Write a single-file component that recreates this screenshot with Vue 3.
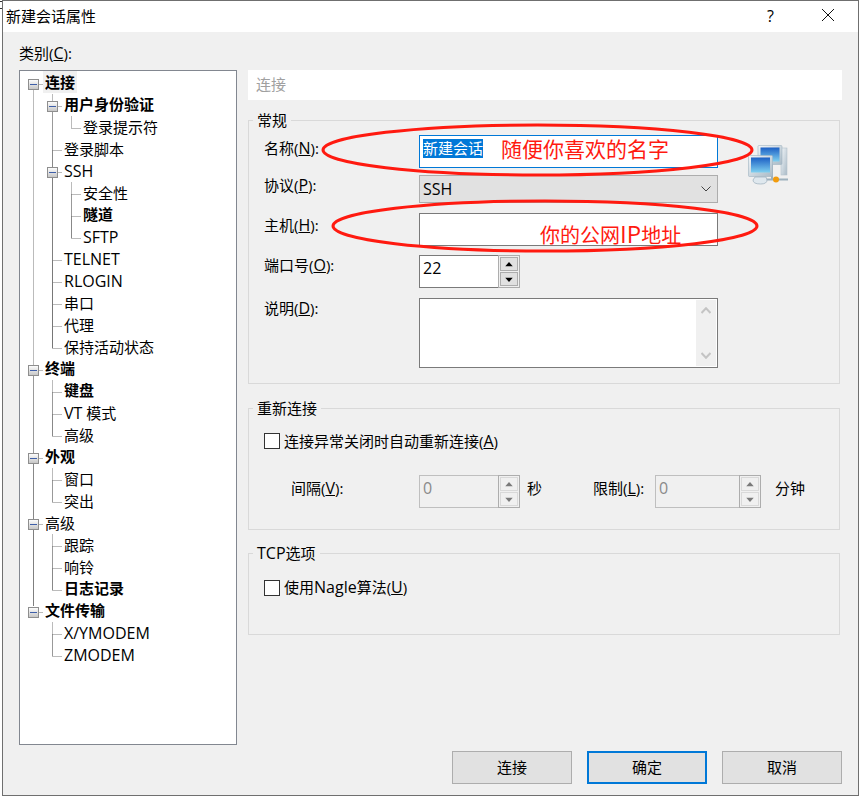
<script setup>
const rows = [
  { t: '连接', l: 0, b: 1, box: 1, sel: 1 },
  { t: '用户身份验证', l: 1, b: 1, box: 1 },
  { t: '登录提示符', l: 2 },
  { t: '登录脚本', l: 1 },
  { t: 'SSH', l: 1, box: 1 },
  { t: '安全性', l: 2 },
  { t: '隧道', l: 2, b: 1 },
  { t: 'SFTP', l: 2 },
  { t: 'TELNET', l: 1 },
  { t: 'RLOGIN', l: 1 },
  { t: '串口', l: 1 },
  { t: '代理', l: 1 },
  { t: '保持活动状态', l: 1 },
  { t: '终端', l: 0, b: 1, box: 1 },
  { t: '键盘', l: 1, b: 1 },
  { t: 'VT 模式', l: 1 },
  { t: '高级', l: 1 },
  { t: '外观', l: 0, b: 1, box: 1 },
  { t: '窗口', l: 1 },
  { t: '突出', l: 1 },
  { t: '高级', l: 0, box: 1 },
  { t: '跟踪', l: 1 },
  { t: '响铃', l: 1 },
  { t: '日志记录', l: 1, b: 1 },
  { t: '文件传输', l: 0, b: 1, box: 1 },
  { t: 'X/YMODEM', l: 1 },
  { t: 'ZMODEM', l: 1 }
]

const parts = (t) => t.split(/([A-Za-z/]+)/).filter(Boolean)
const isLatin = (s) => /^[A-Za-z/]+$/.test(s)

const rowY = (i) => 84 + i * 22
const guideX = [33, 52, 71]
const hEnd = [43, 62, 80]
const lines = []
const boxes = []

rows.forEach((r, i) => {
  const y = rowY(i)
  const x = guideX[r.l]
  lines.push({ x1: r.box ? x + 6 : x, y1: y, x2: hEnd[r.l], y2: y })
  if (r.box) boxes.push({ x: x - 5, y: y - 5 })
  let last = -1
  for (let j = i + 1; j < rows.length; j++) {
    if (rows[j].l <= r.l - 1) break
    if (rows[j].l === r.l) last = j
  }
  if (last > -1) {
    lines.push({ x1: x, y1: y + (r.box ? 6 : 0), x2: x, y2: rowY(last) - (rows[last].box ? 6 : 0) })
  }
  if (r.box && rows[i + 1] && rows[i + 1].l === r.l + 1) {
    let end = i + 1
    for (let j = i + 1; j < rows.length; j++) {
      if (rows[j].l <= r.l) break
      if (rows[j].l === r.l + 1) end = j
    }
    lines.push({ x1: guideX[r.l + 1], y1: y + 10, x2: guideX[r.l + 1], y2: rowY(end) - (rows[end].box ? 6 : 0) })
  }
})
</script>

<template>
  <div class="root">
    <div class="window">
      <div class="titlebar">
        <span class="title">新建会话属性</span>
        <span class="help">?</span>
        <svg class="close" width="14" height="14" viewBox="0 0 14 14">
          <path d="M1 1 L13 13 M13 1 L1 13" stroke="#111" stroke-width="1" fill="none" />
        </svg>
      </div>

      <div class="content">
        <div class="left">
          <div class="cat-label">类别(<u>C</u>):</div>
          <div class="tree">
            <svg class="tree-lines" width="216" height="673" viewBox="20 71 216 673">
              <defs>
                <linearGradient id="boxfill" x1="0" y1="0" x2="0" y2="1">
                  <stop offset="0" stop-color="#ffffff" />
                  <stop offset="1" stop-color="#c4c4c4" />
                </linearGradient>
              </defs>
              <line
                v-for="(s, i) in lines"
                :key="i"
                :x1="s.x1 + 0.5"
                :y1="s.y1 + 0.5"
                :x2="s.x2 + 0.5"
                :y2="s.y2 + 0.5"
                stroke="#777"
                stroke-dasharray="1 1"
              />
              <g v-for="(b, i) in boxes" :key="'b' + i">
                <rect :x="b.x + 0.5" :y="b.y + 0.5" width="10" height="10" fill="url(#boxfill)" stroke="#8e8e8e" />
                <line :x1="b.x + 2" :y1="b.y + 5.5" :x2="b.x + 9" :y2="b.y + 5.5" stroke="#3f5fa8" />
              </g>
            </svg>
            <div
              v-for="(r, i) in rows"
              :key="i"
              class="row"
              :class="['lvl' + r.l, { bold: r.b }]"
            >
              <span class="row-text" :class="{ sel: r.sel }"><span
                v-for="(p, k) in parts(r.t)"
                :key="k"
                :class="{ lat: isLatin(p) }"
              >{{ p }}</span></span>
            </div>
          </div>
        </div>

        <div class="right">
          <div class="header">连接</div>

          <div class="group g1">
            <span class="legend">常规</span>
            <div class="general">
              <div class="form">
                <div class="frow h33">
                  <label class="lab p3">名称(<u>N</u>):</label>
                  <div class="input focus h33"><span class="picked">新建会话</span></div>
                </div>
                <div class="frow mt7">
                  <label class="lab p0">协议(<u>P</u>):</label>
                  <div class="select">
                    <span class="lat sel-text">SSH</span>
                    <svg width="10" height="6" viewBox="0 0 10 6"><path d="M0.5 0.5 L5 5 L9.5 0.5" stroke="#444" fill="none" /></svg>
                  </div>
                </div>
                <div class="frow mt10">
                  <label class="lab p2">主机(<u>H</u>):</label>
                  <div class="input h33"></div>
                </div>
                <div class="frow mt9">
                  <label class="lab p0">端口号(<u>O</u>):</label>
                  <div class="spin w101">
                    <div class="spin-input lat">22</div>
                    <div class="spin-btns">
                      <div class="sbtn"><svg width="8" height="5" viewBox="0 0 9 6"><path d="M4.5 0 L9 5 L0 5 Z" fill="#000" /></svg></div>
                      <div class="sbtn"><svg width="8" height="5" viewBox="0 0 9 6"><path d="M0 1 L9 1 L4.5 6 Z" fill="#000" /></svg></div>
                    </div>
                  </div>
                </div>
                <div class="frow mt10">
                  <label class="lab p0">说明(<u>D</u>):</label>
                  <div class="memo">
                    <div class="memo-bar">
                      <svg width="10" height="7" viewBox="0 0 10 7"><path d="M0.5 6 L5 1.2 L9.5 6" stroke="#c4c4c4" stroke-width="2" fill="none" /></svg>
                      <svg width="10" height="7" viewBox="0 0 10 7"><path d="M0.5 1 L5 5.8 L9.5 1" stroke="#c4c4c4" stroke-width="2" fill="none" /></svg>
                    </div>
                  </div>
                </div>
              </div>

              <svg class="net-icon" width="41" height="41" viewBox="0 0 41 41">
                <defs>
                  <linearGradient id="scr" x1="0" y1="0" x2="0" y2="1">
                    <stop offset="0" stop-color="#1c5fc4" />
                    <stop offset="1" stop-color="#7fd0f0" />
                  </linearGradient>
                  <linearGradient id="shell" x1="0" y1="0" x2="1" y2="1">
                    <stop offset="0" stop-color="#f2f6f9" />
                    <stop offset="1" stop-color="#a9bac6" />
                  </linearGradient>
                </defs>
                <rect x="33" y="3" width="6" height="27" fill="url(#shell)" stroke="#b4c2cc" stroke-width="0.6" />
                <rect x="10" y="0.5" width="24" height="19" rx="1" fill="url(#shell)" stroke="#9fb3c1" stroke-width="0.6" />
                <rect x="12.5" y="2.5" width="19" height="14" fill="url(#scr)" />
                <path d="M24 19 L24 34" stroke="#9db0bd" stroke-width="2" />
                <path d="M18 34.5 L40 34.5" stroke="#9db0bd" stroke-width="2" />
                <rect x="0.5" y="10.5" width="24" height="21" rx="1" fill="url(#shell)" stroke="#9fb3c1" stroke-width="0.6" />
                <rect x="3" y="12.5" width="19" height="15" fill="url(#scr)" />
                <path d="M7 32 L18 32 L19 35 Q19 39 12.5 39 Q5 39 5 35 Z" fill="#dfe8ee" stroke="#a2b4c0" stroke-width="0.8" />
                <circle cx="28" cy="34.5" r="3" fill="#f29c0d" />
              </svg>
            </div>
          </div>

          <div class="group g2">
            <span class="legend">重新连接</span>
            <div class="check-row">
              <span class="checkbox"></span>
              <span class="check-text">连接异常关闭时自动重新连接(<u>A</u>)</span>
            </div>
            <div class="interval">
              <label class="int-lab">间隔(<u>V</u>):</label>
              <div class="spin disabled w101">
                <div class="spin-input lat">0</div>
                <div class="spin-btns">
                  <div class="sbtn"><svg width="8" height="5" viewBox="0 0 9 6"><path d="M4.5 0 L9 5 L0 5 Z" fill="#7a7a7a" /></svg></div>
                  <div class="sbtn"><svg width="8" height="5" viewBox="0 0 9 6"><path d="M0 1 L9 1 L4.5 6 Z" fill="#7a7a7a" /></svg></div>
                </div>
              </div>
              <span class="sec">秒</span>
              <label class="lim-lab">限制(<u>L</u>):</label>
              <div class="spin disabled w106">
                <div class="spin-input lat">0</div>
                <div class="spin-btns">
                  <div class="sbtn"><svg width="8" height="5" viewBox="0 0 9 6"><path d="M4.5 0 L9 5 L0 5 Z" fill="#7a7a7a" /></svg></div>
                  <div class="sbtn"><svg width="8" height="5" viewBox="0 0 9 6"><path d="M0 1 L9 1 L4.5 6 Z" fill="#7a7a7a" /></svg></div>
                </div>
              </div>
              <span class="min">分钟</span>
            </div>
          </div>

          <div class="group g3">
            <span class="legend"><span class="lat">TCP</span>选项</span>
            <div class="check-row">
              <span class="checkbox"></span>
              <span class="check-text up">使用<span class="lat">Nagle</span>算法(<u>U</u>)</span>
            </div>
          </div>

          <div class="footer">
            <button class="btn">连接</button>
            <button class="btn primary">确定</button>
            <button class="btn">取消</button>
          </div>
        </div>
      </div>
    </div>

    <svg class="marks" width="861" height="798" viewBox="0 0 861 798">
      <ellipse cx="537.5" cy="150" rx="214.5" ry="25" fill="none" stroke="#ff1a10" stroke-width="3" />
      <ellipse cx="545" cy="226" rx="212" ry="25" fill="none" stroke="#ff1a10" stroke-width="3" />
    </svg>
    <span class="note n1">随便你喜欢的名字</span>
    <span class="note n2">你的公网<span class="ip">IP</span>地址</span>
    <span class="corner"></span>
  </div>
</template>

<style>
html, body { margin: 0; background: #fff; }
</style>

<style scoped>
* { box-sizing: border-box; }
.root {
  position: relative;
  width: 861px;
  height: 798px;
  overflow: hidden;
  background: #fff;
  font-family: "Open Sans", "Noto Sans CJK SC", sans-serif;
  font-size: 15px;
  line-height: 20px;
  color: #000;
}
.lat { font-size: 16px; }
u { font-size: 16px; }
.window {
  margin-left: 2px;
  width: 857px;
  height: 796px;
  border: 1px solid #6f6f6f;
  background: #f0f0f0;
}
.titlebar {
  height: 31px;
  background: #fff;
  display: flex;
  align-items: center;
  padding-left: 3px;
}
.title { flex: 1; margin-top: -1px; }
.help { width: 10px; margin-right: 44px; font-size: 16px; margin-top: -2px; }
.close { margin-right: 23px; margin-top: -3px; }

.content { display: flex; padding-left: 16px; }
.left { width: 218px; margin-right: 11px; }
.cat-label { height: 38px; padding-top: 11px; }
.tree {
  position: relative;
  height: 675px;
  background: #fff;
  border: 1px solid #828790;
}
.tree-lines { position: absolute; left: 0; top: 0; }
.row { height: 22px; line-height: 22px; white-space: nowrap; position: relative; }
.row-text { display: inline-block; height: 22px; padding: 0 2px; line-height: 22px; }
.row:not(.bold) .row-text { line-height: 24px; }
.lvl0 { padding-left: 23px; }
.lvl1 { padding-left: 42px; }
.lvl2 { padding-left: 61px; }
.bold { font-weight: 700; }
.sel { background: #f0f0f0; }

.right { width: 594px; padding-top: 38px; }
.header {
  height: 30px;
  line-height: 28px;
  background: #fff;
  padding-left: 8px;
  color: #a0a0a0;
  margin-bottom: 20px;
}
.group {
  position: relative;
  width: 592px;
  border: 1px solid #d9d9d9;
  padding-left: 15px;
}
.legend {
  position: absolute;
  left: 4px;
  top: -11px;
  padding: 0 4px;
  height: 20px;
  background: #f0f0f0;
}
.g1 { height: 264px; padding-top: 14px; margin-bottom: 24px; }
.g2 { height: 122px; padding-top: 24px; margin-bottom: 23px; }
.g3 { height: 82px; padding-top: 26px; }

.general { display: flex; }
.form { width: 454px; }
.net-icon { margin: 10px 0 0 30px; }
.frow { display: flex; align-items: flex-start; }
.lab { width: 155px; }
.p0 { padding-top: 0; }
.p2 { padding-top: 2px; }
.p3 { padding-top: 3px; }
.mt7 { margin-top: 7px; }
.mt9 { margin-top: 9px; }
.mt10 { margin-top: 10px; }
.input {
  width: 299px;
  background: #fff;
  border: 1px solid #7a7a7a;
}
.h33 { height: 33px; }
.focus { border-color: #0078d7; padding: 2px 0 0 3px; }
.picked { display: inline-block; background: #0078d7; color: #fff; height: 19px; line-height: 19px; }
.select {
  width: 299px;
  height: 28px;
  background: #e1e1e1;
  border: 1px solid #adadad;
  display: flex;
  align-items: center;
  justify-content: space-between;
  padding: 0 6px 0 3px;
}
.sel-text { margin-top: -1px; }
.spin { display: flex; height: 33px; }
.w101 { width: 101px; }
.w106 { width: 106px; }
.spin-input {
  flex: 1;
  background: #fff;
  border: 1px solid #7a7a7a;
  border-right: none;
  padding: 2px 0 0 3px;
  line-height: 20px;
}
.spin-btns {
  width: 22px;
  border: 1px solid #adadad;
  padding: 1px;
  display: flex;
  flex-direction: column;
  gap: 1px;
}
.sbtn {
  flex: 1;
  background: #e1e1e1;
  border: 1px solid #adadad;
  display: flex;
  align-items: center;
  justify-content: center;
}
.disabled .spin-input {
  background: #f0f0f0;
  border-color: #bfbfbf;
  color: #8a8a8a;
}
.disabled .sbtn { background: #f0f0f0; border-color: #d9d9d9; }
.memo {
  width: 299px;
  height: 70px;
  background: #fff;
  border: 1px solid #7a7a7a;
  padding: 1px;
  display: flex;
  justify-content: flex-end;
}
.memo-bar {
  width: 20px;
  background: #f0f0f0;
  display: flex;
  flex-direction: column;
  justify-content: space-between;
  align-items: center;
  padding: 7px 0 7px;
}
.check-row { display: flex; align-items: center; height: 16px; }
.check-text { margin-top: -1px; }
.check-text.up { margin-top: -3px; }
.checkbox {
  width: 16px;
  height: 16px;
  background: #fff;
  border: 1px solid #333;
  margin-right: 4px;
}
.interval { display: flex; align-items: flex-start; margin-top: 26px; height: 33px; padding-left: 27px; }
.int-lab { width: 128px; padding-top: 3px; }
.sec { width: 73px; padding: 3px 0 0 7px; }
.lim-lab { width: 62px; padding-top: 3px; }
.min { padding: 3px 0 0 14px; }
.footer { display: flex; justify-content: flex-end; gap: 15px; margin-top: 116px; }
.btn {
  width: 120px;
  height: 33px;
  background: #e1e1e1;
  border: 1px solid #adadad;
  font: inherit;
  color: #000;
  padding: 0 0 2px;
}
.primary { border: 2px solid #0078d7; }

.marks { position: absolute; left: 0; top: 0; pointer-events: none; }
.note { position: absolute; color: #ff1a10; white-space: nowrap; }
.n1 { left: 501px; top: 134px; font-size: 21px; line-height: 30px; }
.n2 { left: 540px; top: 219px; font-size: 20px; line-height: 30px; }
.ip { font-size: 24px; }
.corner {
  position: absolute;
  left: 0;
  top: 1px;
  width: 2px;
  height: 8px;
  border-top: 1px solid #333;
  border-bottom: 1px solid #333;
}
</style>
